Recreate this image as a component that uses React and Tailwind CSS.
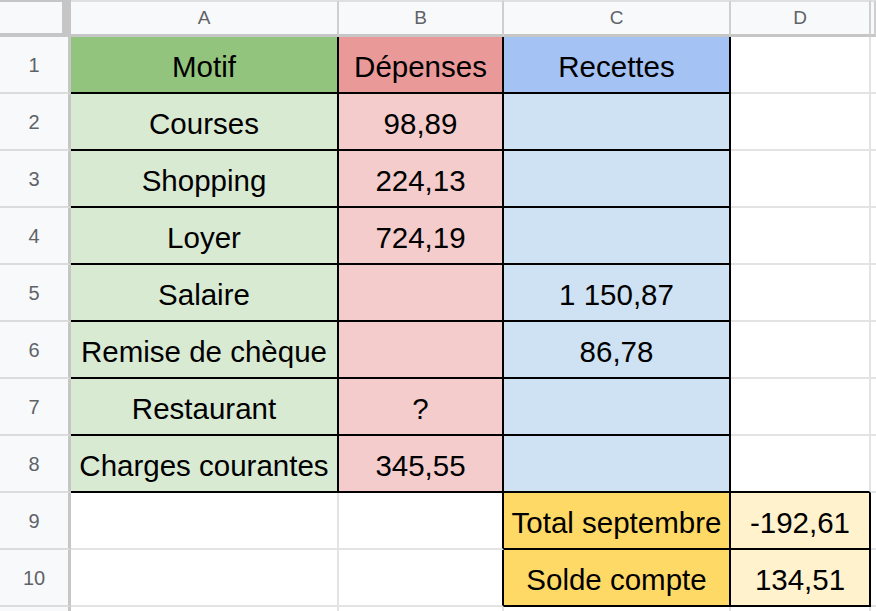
const COLS = ['A', 'B', 'C', 'D', '']

// cell styles: bg + right border + bottom border, written out in full
const S = {
  hA: 'bg-[#93c47d] border-r-black border-b-black',
  hB: 'bg-[#ea9999] border-r-black border-b-black',
  hC: 'bg-[#a4c2f4] border-r-black border-b-black',
  a: 'bg-[#d9ead3] border-r-black border-b-black',
  b: 'bg-[#f4cccc] border-r-black border-b-black',
  c: 'bg-[#cfe2f3] border-r-black border-b-black',
  w: 'bg-white border-r-[#e2e3e3] border-b-[#e2e3e3]',
  wBlackB: 'bg-white border-r-[#e2e3e3] border-b-black',
  wBlackR: 'bg-white border-r-black border-b-[#e2e3e3]',
  y: 'bg-[#ffd966] border-r-black border-b-black',
  cream: 'bg-[#fff2cc] border-r-black border-b-black',
  e: 'bg-white border-r-transparent border-b-[#e2e3e3]',
}

const rows = [
  [['Motif', S.hA], ['Dépenses', S.hB], ['Recettes', S.hC], ['', S.w]],
  [['Courses', S.a], ['98,89', S.b], ['', S.c], ['', S.w]],
  [['Shopping', S.a], ['224,13', S.b], ['', S.c], ['', S.w]],
  [['Loyer', S.a], ['724,19', S.b], ['', S.c], ['', S.w]],
  [['Salaire', S.a], ['', S.b], ['1 150,87', S.c], ['', S.w]],
  [['Remise de chèque', S.a], ['', S.b], ['86,78', S.c], ['', S.w]],
  [['Restaurant', S.a], ['?', S.b], ['', S.c], ['', S.w]],
  [['Charges courantes', S.a], ['345,55', S.b], ['', S.c], ['', S.wBlackB]],
  [['', S.w], ['', S.wBlackR], ['Total septembre', S.y], ['-192,61', S.cream]],
  [['', S.w], ['', S.wBlackR], ['Solde compte', S.y], ['134,51', S.cream]],
]

function Cell({ text, cls }) {
  return (
    <div className={`h-[57px] pt-[4px] border-r-2 border-b-2 flex items-center justify-center whitespace-nowrap text-[29.5px] leading-none text-black ${cls}`}>
      {text}
    </div>
  )
}

export default function App() {
  return (
    <div
      className="w-[876px] h-[611px] overflow-hidden bg-white"
      style={{ fontFamily: '"Liberation Sans", Arial, sans-serif' }}
    >
      <div className="grid grid-cols-[71px_268px_165px_227px_140px_5px]">
        {/* Column headers */}
        <div className="h-[37px] bg-[#c6c6c6] pt-[2px] pb-[4px] pr-[9px]">
          <div className="h-full bg-[#f8f9fa]" />
        </div>
        {COLS.map((c, i) => (
          <div
            key={i}
            className="h-[37px] bg-[#f8f9fa] border-t-2 border-t-[#e0e0e0] border-r-2 border-r-[#cfcfcf] border-b-[3px] border-b-[#c6c6c6] flex items-center justify-center text-[19px] text-[#5f6368]"
          >
            {c}
          </div>
        ))}

        {/* Rows */}
        {rows.map((r, i) => (
          <div key={i} className="contents">
            <div className="h-[57px] bg-[#f8f9fa] border-r-[3px] border-r-[#c6c6c6] border-b-2 border-b-[#dcdcdc] flex items-center justify-center text-[20px] text-[#5f6368]">
              {i + 1}
            </div>
            {r.map(([t, cls], j) => (
              <Cell key={j} text={t} cls={cls} />
            ))}
            <div className={`h-[57px] border-b-2 ${S.e}`} />
          </div>
        ))}

        {/* Partial row 11 */}
        <div className="h-[10px] bg-[#f8f9fa] border-r-[3px] border-r-[#c6c6c6]" />
        <div className="h-[10px] border-r-2 border-r-[#e2e3e3]" />
        <div className="h-[10px] border-r-2 border-r-[#e2e3e3]" />
        <div className="h-[10px] border-r-2 border-r-[#e2e3e3]" />
        <div className="h-[10px] border-r-2 border-r-[#e2e3e3]" />
        <div className="h-[10px]" />
      </div>
    </div>
  )
}
